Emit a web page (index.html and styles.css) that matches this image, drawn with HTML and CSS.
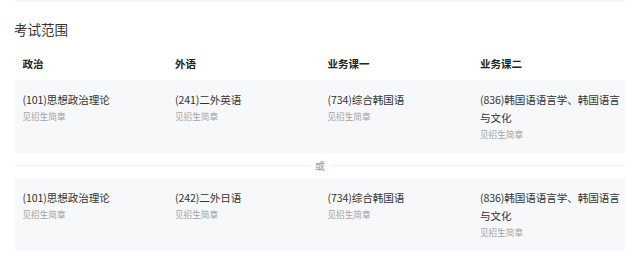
FILE: index.html
```html
<!DOCTYPE html>
<html lang="zh">
<head>
<meta charset="utf-8">
<link rel="stylesheet" href="styles.css">
</head>
<body>
<div class="page">
  <div class="topbar"></div>
  <h2 class="title">考试范围</h2>
  <div class="grid head">
    <div class="cell">政治</div>
    <div class="cell">外语</div>
    <div class="cell">业务课一</div>
    <div class="cell">业务课二</div>
  </div>
  <div class="grid block">
    <div class="cell"><div class="main">(101)思想政治理论</div><div class="sub">见招生简章</div></div>
    <div class="cell"><div class="main">(241)二外英语</div><div class="sub">见招生简章</div></div>
    <div class="cell"><div class="main">(734)综合韩国语</div><div class="sub">见招生简章</div></div>
    <div class="cell"><div class="main">(836)韩国语语言学、韩国语言与文化</div><div class="sub">见招生简章</div></div>
  </div>
  <div class="divider"><span class="line"></span><span class="or">或</span><span class="line"></span></div>
  <div class="grid block">
    <div class="cell"><div class="main">(101)思想政治理论</div><div class="sub">见招生简章</div></div>
    <div class="cell"><div class="main">(242)二外日语</div><div class="sub">见招生简章</div></div>
    <div class="cell"><div class="main">(734)综合韩国语</div><div class="sub">见招生简章</div></div>
    <div class="cell"><div class="main">(836)韩国语语言学、韩国语言与文化</div><div class="sub">见招生简章</div></div>
  </div>
</div>
</body>
</html>
```

FILE: styles.css
```css
html, body {
  margin: 0;
  padding: 0;
  background: #fff;
}
body {
  font-family: "Noto Sans CJK SC", "Noto Sans", sans-serif;
  color: #333;
}
.page {
  padding: 0 15px;
}
.topbar {
  height: 2px;
  background: #f1f2f4;
}
.title {
  margin: 17px 0 8px -1px;
  font-size: 13.5px;
  line-height: 20px;
  font-weight: 400;
  color: #333;
}
.grid {
  display: grid;
  grid-template-columns: repeat(4, 1fr);
}
.cell {
  padding: 0 0 0 7.5px;
}
.head {
  height: 33px;
  align-items: center;
  font-size: 10.5px;
  font-weight: 700;
  color: #222;
}
.block {
  background: #f7f8fa;
  padding: 11px 0 11px;
}
.main {
  font-size: 10.6px;
  line-height: 18px;
  color: #333;
  letter-spacing: -0.1px;
}
.sub {
  font-size: 8.6px;
  line-height: 15px;
  color: #a3a3a3;
}
.divider {
  height: 25px;
  display: flex;
  align-items: center;
  gap: 6px;
}
.line {
  flex: 1;
  height: 1px;
  background: #eeeff1;
}
.or {
  font-size: 10px;
  color: #999;
  line-height: 12px;
}
```
